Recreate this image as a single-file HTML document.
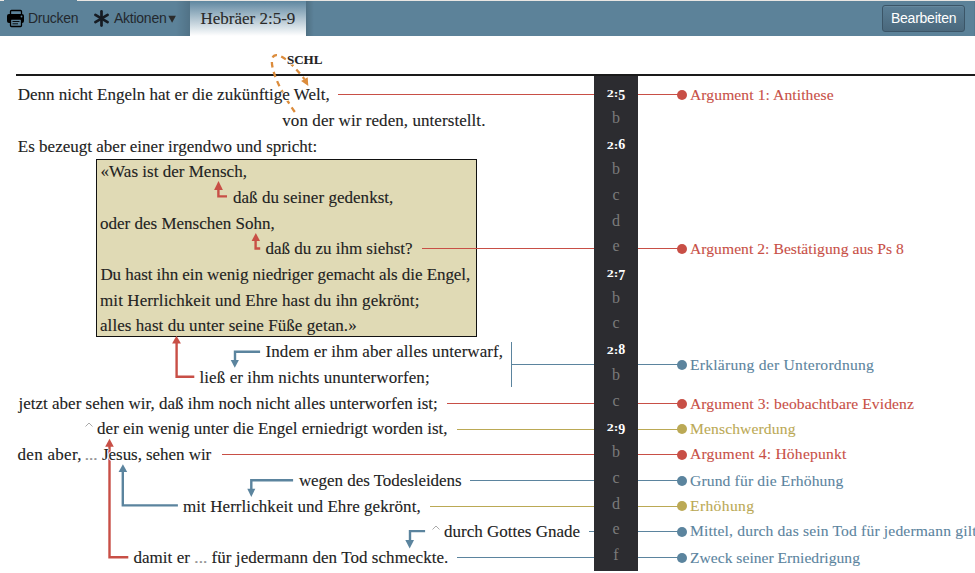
<!DOCTYPE html>
<html><head><meta charset="utf-8"><title>Hebräer 2:5-9</title>
<style>
html,body{margin:0;padding:0;}
body{width:975px;height:573px;overflow:hidden;background:#fff;position:relative;font-family:"Liberation Serif",serif;}
.t{position:absolute;font-size:17px;line-height:20px;white-space:nowrap;color:#222;-webkit-text-stroke:0.12px #222;}
.g{color:#999;}
.h{text-shadow:1px 0 0 #fff,-1px 0 0 #fff,0 1px 0 #fff,0 -1px 0 #fff;}
.lb{position:absolute;left:690px;font-size:15.6px;line-height:20px;white-space:nowrap;-webkit-text-stroke:0.1px currentColor;}
.v{position:absolute;left:594px;width:44px;text-align:center;font-size:16px;line-height:20px;color:#7b7b7b;}
.v.b{font-weight:bold;color:#fff;font-size:14px;}
.os{display:inline-block;transform:scaleY(0.74);transform-origin:0 15px;}
.dn{position:relative;top:3px;}
.ln{position:absolute;height:1px;}
.dot{position:absolute;left:677px;width:10px;height:10px;border-radius:50%;}
#hdr{position:absolute;left:0;top:0;width:975px;height:36px;background:#5c8299;}
#topline{position:absolute;left:77px;top:0;width:898px;height:1px;background:#e9e6e2;}
.hs{position:absolute;font-family:"Liberation Sans",sans-serif;font-size:14px;letter-spacing:-0.25px;line-height:16px;color:#23282e;white-space:nowrap;}
#tab{position:absolute;left:190px;top:1px;width:116px;height:35px;background:linear-gradient(#5f87a0,#ffffff);}
#btn{position:absolute;left:882px;top:5px;width:81px;height:25px;border:1px solid #3b5567;border-radius:3px;background:linear-gradient(#5a7e95,#4a687c);box-shadow:inset 0 1px 0 rgba(255,255,255,0.08);}
</style></head><body>

<div id="hdr"></div><div id="topline"></div><div style="position:absolute;left:0;top:0;width:4px;height:1px;background:#e9e6e2"></div><div style="position:absolute;left:974px;top:1px;width:1px;height:35px;background:#557a90"></div>
<div style="position:absolute;left:176px;top:1px;width:14px;height:35px;background:linear-gradient(90deg,rgba(0,0,0,0),rgba(0,0,0,0.12));"></div>
<div id="tab"></div>
<div style="position:absolute;left:306px;top:1px;width:8px;height:35px;background:linear-gradient(90deg,rgba(0,0,0,0.15),rgba(0,0,0,0));"></div>
<svg style="position:absolute;left:0;top:0" width="60" height="36">
<rect x="10.5" y="10.5" width="11" height="6" rx="1" fill="none" stroke="#000" stroke-width="1.3"/>
<rect x="7" y="14" width="17" height="9" rx="2" fill="#000"/>
<circle cx="21.5" cy="16.5" r="0.9" fill="#5c8299"/>
<rect x="10.5" y="19" width="11" height="7.5" rx="1" fill="#5c8299" stroke="#000" stroke-width="1.3"/>
<line x1="12.5" y1="21.5" x2="19.5" y2="21.5" stroke="#000" stroke-width="0.9"/>
<line x1="12.5" y1="23.8" x2="18" y2="23.8" stroke="#000" stroke-width="0.9"/>
</svg>
<div class="hs" style="left:28px;top:10px">Drucken</div>
<svg style="position:absolute;left:90px;top:6px" width="24" height="26">
<g stroke="#161b22" stroke-width="2.7" stroke-linecap="round">
<line x1="11.5" y1="5.4" x2="11.5" y2="19.6"/>
<line x1="5.4" y1="8.9" x2="17.6" y2="16.1"/>
<line x1="5.4" y1="16.1" x2="17.6" y2="8.9"/>
</g></svg>
<div class="hs" style="left:114px;top:10px">Aktionen</div>
<svg style="position:absolute;left:168px;top:15px" width="9" height="8"><path d="M0.3 0.8 L7.9 0.8 L4.1 7.8 Z" fill="#2b2b2b"/></svg>
<div class="t" style="left:200.5px;top:9px;color:#2a2a2a">Hebräer 2:5-9</div>
<div id="btn"></div>
<div class="hs" style="left:891px;top:10px;color:#fff;width:66px">Bearbeiten</div>
<div style="position:absolute;left:16px;top:74px;width:959px;height:2px;background:#1a1a1a"></div>
<div style="position:absolute;left:594px;top:76px;width:44px;height:495px;background:#2c2c30"></div>
<div style="position:absolute;left:96px;top:159px;width:379px;height:176px;border:1px solid #111;background:#e0dab5"></div>
<svg style="position:absolute;left:0;top:0" width="975" height="573">
<path d="M294.8 112 C258.4 59.2 268.1 32.5 304.4 79.1" fill="none" stroke="#dc8c3c" stroke-width="2.3" stroke-dasharray="5.5 4.5"/>
<path d="M308.3 86.1 L301.1 81 L307.7 77.2 Z" fill="#dc8c3c"/>
</svg>
<svg style="position:absolute;left:0;top:0" width="975" height="573">
<g fill="none" stroke-width="2.4">
<path d="M218.4 188 V196.4 H227" stroke="#c84f46"/>
<path d="M255.6 240 V248.5 H260.2" stroke="#c84f46"/>
<path d="M176.6 342 V376.8 H194.3" stroke="#c84f46"/>
<path d="M109.5 446 V557.2 H128.3" stroke="#c84f46"/>
<path d="M260.1 351.8 H235 V360" stroke="#5b849e"/>
<path d="M293.1 480.3 H251.3 V489" stroke="#5b849e"/>
<path d="M177.9 505.4 H122.8 V471" stroke="#5b849e"/>
<path d="M425.1 531.1 H410 V540" stroke="#5b849e"/>
</g>
<g>
<path d="M218.5 181 L222.9 190 L214.1 190 Z" fill="#c84f46"/>
<path d="M255.8 233 L260 241 L251.6 241 Z" fill="#c84f46"/>
<path d="M176.5 335.8 L180.9 343.6 L172.1 343.6 Z" fill="#c84f46"/>
<path d="M109.5 438.8 L113.8 446.7 L105.2 446.7 Z" fill="#c84f46"/>
<path d="M234.8 367.8 L238.9 360.1 L230.7 360.1 Z" fill="#5b849e"/>
<path d="M251.3 496.9 L255.3 488.7 L247.3 488.7 Z" fill="#5b849e"/>
<path d="M122.9 464.2 L127.2 472.1 L118.6 472.1 Z" fill="#5b849e"/>
<path d="M409.7 548.5 L414 540.1 L405.3 540.1 Z" fill="#5b849e"/>
</g>
<g fill="none" stroke="#aaa" stroke-width="1">
<path d="M85.5 426.5 L89 423 L92.5 426.5"/>
<path d="M432.5 529.5 L436 526 L439.5 529.5"/>
</g>
</svg>
<div class="t h" style="left:287px;top:50px;font-size:13px;font-weight:bold;color:#222">SCHL</div>
<div class="t h" style="left:17.7px;top:85px;letter-spacing:0.007px">Denn nicht Engeln hat er die zukünftige Welt,</div>
<div class="t h" style="left:282.3px;top:111px;letter-spacing:0.067px">von der wir reden, unterstellt.</div>
<div class="t h" style="left:17.8px;top:137px;letter-spacing:0.01px">Es bezeugt aber einer irgendwo und spricht:</div>
<div class="t" style="left:100.6px;top:162px;letter-spacing:0.021px">«Was ist der Mensch,</div>
<div class="t" style="left:233px;top:188px;letter-spacing:0.036px">daß du seiner gedenkst,</div>
<div class="t" style="left:100px;top:214px;letter-spacing:0.005px">oder des Menschen Sohn,</div>
<div class="t" style="left:265.5px;top:239px;letter-spacing:-0.015px">daß du zu ihm siehst?</div>
<div class="t" style="left:100.4px;top:265px;letter-spacing:-0.058px">Du hast ihn ein wenig niedriger gemacht als die Engel,</div>
<div class="t" style="left:100px;top:291px;letter-spacing:0.1px">mit Herrlichkeit und Ehre hast du ihn gekrönt;</div>
<div class="t" style="left:100px;top:316px;letter-spacing:0.059px">alles hast du unter seine Füße getan.»</div>
<div class="t h" style="left:265.5px;top:342px;letter-spacing:0.076px">Indem er ihm aber alles unterwarf,</div>
<div class="t h" style="left:199.5px;top:368px;letter-spacing:0.081px">ließ er ihm nichts ununterworfen;</div>
<div class="t h" style="left:18.5px;top:394px;letter-spacing:0.005px">jetzt aber sehen wir, daß ihm noch nicht alles unterworfen ist;</div>
<div class="t h" style="left:97.1px;top:419px;letter-spacing:-0.006px">der ein wenig unter die Engel erniedrigt worden ist,</div>
<div class="t h" style="left:17.5px;top:445px;letter-spacing:0.29px">den aber,</div>
<div class="t h" style="left:84.8px;top:445px;letter-spacing:0px"><span class="g">...</span></div>
<div class="t h" style="left:102px;top:445px;letter-spacing:-0.05px">Jesus, sehen wir</div>
<div class="t h" style="left:298.9px;top:471px;letter-spacing:-0.048px">wegen des Todesleidens</div>
<div class="t h" style="left:183px;top:497px;letter-spacing:0.064px">mit Herrlichkeit und Ehre gekrönt,</div>
<div class="t h" style="left:444px;top:522px;letter-spacing:0.006px">durch Gottes Gnade</div>
<div class="t h" style="left:133.4px;top:548px;letter-spacing:0.057px">damit er <span class="g">...</span> für jedermann den Tod schmeckte.</div>
<div class="v b" style="top:83px"><span class="os">2:</span><span class="dn">5</span></div>
<div class="v" style="top:108px">b</div>
<div class="v b" style="top:135px"><span class="os">2:</span><span class="">6</span></div>
<div class="v" style="top:159px">b</div>
<div class="v" style="top:185px">c</div>
<div class="v" style="top:211px">d</div>
<div class="v" style="top:236px">e</div>
<div class="v b" style="top:263px"><span class="os">2:</span><span class="dn">7</span></div>
<div class="v" style="top:288px">b</div>
<div class="v" style="top:313px">c</div>
<div class="v b" style="top:340px"><span class="os">2:</span><span class="">8</span></div>
<div class="v" style="top:365px">b</div>
<div class="v" style="top:391px">c</div>
<div class="v b" style="top:417px"><span class="os">2:</span><span class="dn">9</span></div>
<div class="v" style="top:442px">b</div>
<div class="v" style="top:468px">c</div>
<div class="v" style="top:494px">d</div>
<div class="v" style="top:519px">e</div>
<div class="v" style="top:545px">f</div>
<div class="ln" style="left:338px;top:94px;width:256px;background:#c84f46"></div>
<div class="ln" style="left:422px;top:248px;width:172px;background:#c84f46"></div>
<div class="ln" style="left:511px;top:364px;width:83px;background:#5b849e"></div>
<div class="ln" style="left:447px;top:403px;width:147px;background:#c84f46"></div>
<div class="ln" style="left:457px;top:429px;width:137px;background:#bba955"></div>
<div class="ln" style="left:222px;top:454px;width:372px;background:#c84f46"></div>
<div class="ln" style="left:470px;top:480px;width:124px;background:#5b849e"></div>
<div class="ln" style="left:430px;top:506px;width:164px;background:#bba955"></div>
<div class="ln" style="left:589px;top:531px;width:5px;background:#5b849e"></div>
<div class="ln" style="left:457px;top:557px;width:137px;background:#5b849e"></div>
<div class="ln" style="left:638px;top:94px;width:44px;background:#c84f46"></div>
<div class="dot" style="top:89.9px;background:#c84f46"></div>
<div class="lb" style="top:85px;color:#c84f46;letter-spacing:0.09px">Argument 1: Antithese</div>
<div class="ln" style="left:638px;top:248px;width:44px;background:#c84f46"></div>
<div class="dot" style="top:243.9px;background:#c84f46"></div>
<div class="lb" style="top:239px;color:#c84f46;letter-spacing:0.048px">Argument 2: Bestätigung aus Ps 8</div>
<div class="ln" style="left:638px;top:364px;width:44px;background:#5b849e"></div>
<div class="dot" style="top:359.9px;background:#5b849e"></div>
<div class="lb" style="top:355px;color:#5b849e;letter-spacing:0.252px">Erklärung der Unterordnung</div>
<div class="ln" style="left:638px;top:403px;width:44px;background:#c84f46"></div>
<div class="dot" style="top:398.9px;background:#c84f46"></div>
<div class="lb" style="top:394px;color:#c84f46;letter-spacing:0.094px">Argument 3: beobachtbare Evidenz</div>
<div class="ln" style="left:638px;top:429px;width:44px;background:#bba955"></div>
<div class="dot" style="top:424.1px;background:#bba955"></div>
<div class="lb" style="top:419px;color:#bba955;letter-spacing:0.125px">Menschwerdung</div>
<div class="ln" style="left:638px;top:454px;width:44px;background:#c84f46"></div>
<div class="dot" style="top:449.9px;background:#c84f46"></div>
<div class="lb" style="top:444px;color:#c84f46;letter-spacing:0.21px">Argument 4: Höhepunkt</div>
<div class="ln" style="left:638px;top:480px;width:44px;background:#5b849e"></div>
<div class="dot" style="top:475.9px;background:#5b849e"></div>
<div class="lb" style="top:471px;color:#5b849e;letter-spacing:0.143px">Grund für die Erhöhung</div>
<div class="ln" style="left:638px;top:506px;width:44px;background:#bba955"></div>
<div class="dot" style="top:501.1px;background:#bba955"></div>
<div class="lb" style="top:496px;color:#bba955;letter-spacing:0.357px">Erhöhung</div>
<div class="ln" style="left:638px;top:531px;width:44px;background:#5b849e"></div>
<div class="dot" style="top:526.9px;background:#5b849e"></div>
<div class="lb" style="top:521px;color:#5b849e;letter-spacing:0.164px">Mittel, durch das sein Tod für jedermann gilt</div>
<div class="ln" style="left:638px;top:557px;width:44px;background:#5b849e"></div>
<div class="dot" style="top:552.9px;background:#5b849e"></div>
<div class="lb" style="top:548px;color:#5b849e;letter-spacing:0.008px">Zweck seiner Erniedrigung</div>
<div style="position:absolute;left:511px;top:342px;width:1px;height:45px;background:#5b849e"></div>
</body></html>
